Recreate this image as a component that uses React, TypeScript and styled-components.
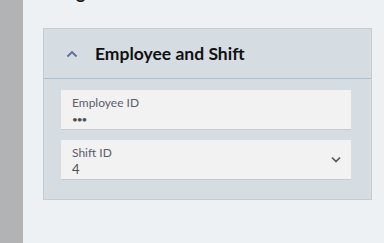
import React from "react";
import styled, { createGlobalStyle } from "styled-components";

const Global = createGlobalStyle`
  html, body { margin: 0; padding: 0; }
  body { background: #eef1f4; font-family: Lato, "Open Sans", sans-serif; }
`;

const Page = styled.div`
  display: flex;
  width: 384px;
  height: 243px;
  overflow: hidden;
`;

const SideStrip = styled.div`
  width: 23px;
  flex: none;
  background: #b2b3b5;
`;

const Main = styled.main`
  flex: 1;
  padding: 0 12px 0 20px;
  background: #eef1f4;
`;

const TitleBar = styled.div`
  height: 28px;
  overflow: hidden;
`;

const Heading = styled.h1`
  margin: -19px 0 0 0;
  font-size: 18px;
  font-weight: 700;
  color: #1b1b1b;
  line-height: 22px;
`;

const Panel = styled.section`
  width: 329px;
  box-sizing: border-box;
  background: #d5dde2;
  border: 1px solid #c5ccd1;
`;

const PanelHeader = styled.div`
  height: 49px;
  display: flex;
  align-items: center;
  border-bottom: 1px solid #a9c1d1;
  padding-left: 22px;
  gap: 17px;
`;

const Title = styled.h2`
  margin: 0;
  font-size: 17.5px;
  font-weight: 700;
  color: #111;
`;

const Body = styled.div`
  display: flex;
  flex-direction: column;
  gap: 10px;
  padding: 11px 20px 19px 17px;
`;

const Field = styled.div`
  height: 40px;
  box-sizing: border-box;
  background: #f2f2f2;
  border-bottom: 1px solid #c9c9c9;
  display: flex;
  align-items: center;
  padding: 0 10px 0 11px;
`;

const FieldText = styled.div`
  flex: 1;
  display: flex;
  flex-direction: column;
  padding-top: 2px;
`;

const Label = styled.span`
  font-size: 12px;
  line-height: 16px;
  color: #5d5d6e;
`;

const Value = styled.span<{ $small?: boolean }>`
  font-size: ${(p) => (p.$small ? "10px" : "13px")};
  line-height: 16px;
  color: #4e4e4e;
  letter-spacing: ${(p) => (p.$small ? "-1px" : "0")};
`;

export default function App() {
  return (
    <>
      <Global />
      <Page>
        <SideStrip />
        <Main>
          <TitleBar>
            <Heading>Assignment</Heading>
          </TitleBar>
          <Panel>
            <PanelHeader>
              <svg width="12" height="8" viewBox="0 0 12 8">
                <path d="M1.5 6.5 L6 2 L10.5 6.5" fill="none" stroke="#5a6ea6" strokeWidth="1.8" />
              </svg>
              <Title>Employee and Shift</Title>
            </PanelHeader>
            <Body>
              <Field>
                <FieldText>
                  <Label>Employee ID</Label>
                  <Value $small>•••</Value>
                </FieldText>
              </Field>
              <Field>
                <FieldText>
                  <Label>Shift ID</Label>
                  <Value>4</Value>
                </FieldText>
                <svg width="10" height="7" viewBox="0 0 10 7">
                  <path d="M1 1.5 L5 5.5 L9 1.5" fill="none" stroke="#555" strokeWidth="1.6" />
                </svg>
              </Field>
            </Body>
          </Panel>
        </Main>
      </Page>
    </>
  );
}
